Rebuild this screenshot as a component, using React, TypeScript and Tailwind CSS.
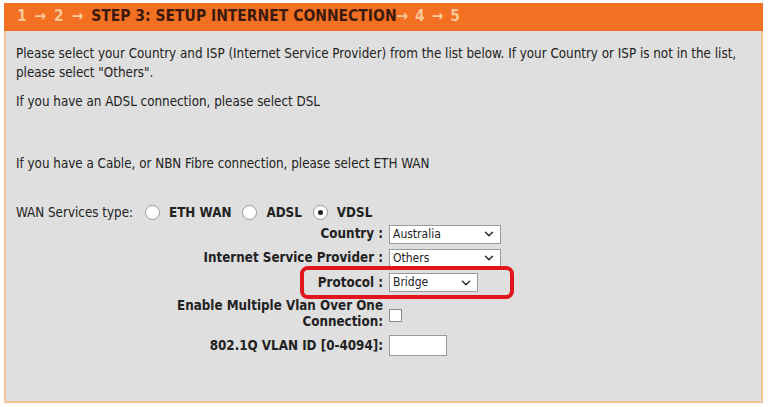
import { ChevronDown } from "lucide-react";

const font = { fontFamily: '"DejaVu Sans Condensed", "DejaVu Sans", sans-serif' };

function Select({ value, width }: { value: string; width: string }) {
  return (
    <div
      className={`${width} h-[19px] bg-white border border-[#9a9a9a] flex items-center justify-between pl-[3px] pr-[4px] text-[12px] font-normal text-[#222]`}
    >
      <span>{value}</span>
      <ChevronDown className="w-[14px] h-[14px] text-[#333]" strokeWidth={2.75} />
    </div>
  );
}

function Radio({ checked }: { checked?: boolean }) {
  return (
    <span className="w-[15px] h-[15px] rounded-full border border-[#999] bg-white flex items-center justify-center">
      {checked && <span className="w-[5px] h-[5px] rounded-full bg-[#222]" />}
    </span>
  );
}

export default function App() {
  return (
    <div className="w-[768px] h-[407px] bg-white pt-[3px] pl-[4px] overflow-hidden" style={font}>
      <div className="w-[759px]">
        {/* Step header */}
        <div className="h-[28px] bg-[#f36f21] flex items-center pl-[13px] text-[15.5px] font-bold whitespace-pre">
          <span className="text-[#fbc89a] [word-spacing:3px]">1 → 2 → </span>
          <span className="text-[#3b1a0c]">STEP 3: SETUP INTERNET CONNECTION</span>
          <span className="text-[#fbc89a] [word-spacing:2px]">→ 4 → 5</span>
        </div>

        {/* Body */}
        <div className="h-[372px] bg-[#dfdfdf] border-2 border-t-0 border-[#f3c496] pl-[10px] pt-[13px] text-[13.3px] text-[#222] leading-[19px]">
          <p className="whitespace-nowrap">
            Please select your Country and ISP (Internet Service Provider) from the list below. If your Country or ISP is not in the list,
            <br />
            please select "Others".
          </p>
          <p className="mt-[10px]">If you have an ADSL connection, please select DSL</p>
          <p className="mt-[43px]">If you have a Cable, or NBN Fibre connection, please select ETH WAN</p>

          <div className="mt-[30px] flex items-center h-[19px]">
            <span className="mr-[12px]">WAN Services type:</span>
            <Radio />
            <span className="font-bold ml-[9px] mr-[11px]">ETH WAN</span>
            <Radio />
            <span className="font-bold ml-[9px] mr-[11px]">ADSL</span>
            <Radio checked />
            <span className="font-bold ml-[9px]">VDSL</span>
          </div>

          <div className="relative grid grid-cols-[367px_auto] gap-x-[6px] items-center font-bold">
            <span className="text-right h-[24px] leading-[24px]">Country :</span>
            <div className="h-[24px] flex items-center">
              <Select value="Australia" width="w-[112px]" />
            </div>
            <span className="text-right h-[24px] leading-[24px]">Internet Service Provider :</span>
            <div className="h-[24px] flex items-center">
              <Select value="Others" width="w-[112px]" />
            </div>
            <span className="text-right h-[25px] leading-[25px]">Protocol :</span>
            <div className="h-[25px] flex items-center">
              <Select value="Bridge" width="w-[89px]" />
            </div>
            <span className="text-right leading-[16px] pt-[3px]">
              Enable Multiple Vlan Over One
              <br />
              Connection:
            </span>
            <div className="flex items-center pt-[6px]">
              <span className="w-[13px] h-[13px] bg-white border border-[#8a8a8a]" />
            </div>
            <span className="text-right h-[31px] leading-[31px]">802.1Q VLAN ID [0-4094]:</span>
            <div className="h-[31px] flex items-center">
              <span className="w-[58px] h-[21px] bg-white border border-[#9a9a9a]" />
            </div>

            {/* highlight around Protocol */}
            <div className="absolute left-[284px] top-[44px] w-[214px] h-[33px] rounded-[8px] border-[4px] border-[#e3151c] pointer-events-none" />
          </div>
        </div>
      </div>
    </div>
  );
}
